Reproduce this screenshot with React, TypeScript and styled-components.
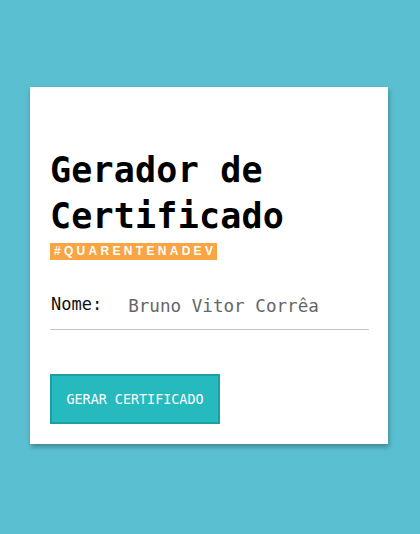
import React from "react";
import styled, { createGlobalStyle } from "styled-components";

const Global = createGlobalStyle`
  html, body { margin: 0; padding: 0; }
  body { background: #5bbfd2; width: 420px; height: 534px; overflow: hidden; }
`;

const Page = styled.div`
  display: flex;
  justify-content: flex-start;
  padding: 87px 0 0 30px;
`;

const Card = styled.div`
  box-sizing: border-box;
  width: 358px;
  height: 357px;
  background: #ffffff;
  box-shadow: 1px 3px 5px rgba(0, 0, 0, 0.3);
  padding: 60px 19px 0 20px;
  display: flex;
  flex-direction: column;
  font-family: "DejaVu Sans Mono", monospace;
`;

const Title = styled.h1`
  margin: 0;
  font-size: 35px;
  line-height: 46px;
  font-weight: bold;
  color: #000;
  letter-spacing: 0.2px;
`;

const Badge = styled.span`
  align-self: flex-start;
  margin-top: 4px;
  background: #f9a544;
  color: #fff;
  font-family: "Liberation Sans", Arial, sans-serif;
  font-weight: bold;
  font-size: 12px;
  letter-spacing: 3.3px;
  line-height: 17px;
  padding: 0 1px 0 4px;
`;

const Field = styled.label`
  display: flex;
  align-items: flex-end;
  gap: 26px;
  margin-top: 33px;
  padding: 0 0 12px 1px;
  border-bottom: 1px solid #c4c4c4;
`;

const Label = styled.span`
  font-size: 17px;
  line-height: 22px;
  margin-bottom: 2px;
  color: #111;
`;

const Input = styled.input`
  border: none;
  outline: none;
  padding: 0;
  height: 22px;
  line-height: 22px;
  flex: 1;
  min-width: 0;
  font-family: "DejaVu Sans Mono", monospace;
  font-size: 17.6px;
  color: #666;
  background: transparent;
`;

const Button = styled.button`
  align-self: flex-start;
  margin-top: 44px;
  width: 170px;
  height: 50px;
  background: #26babe;
  border: 2px solid #1c9ea3;
  color: #fff;
  font-family: "DejaVu Sans Mono", monospace;
  font-size: 13.4px;
  padding: 0;
  cursor: pointer;
`;

export default function App() {
  return (
    <>
      <Global />
      <Page>
        <Card>
          <Title>
            Gerador de
            <br />
            Certificado
          </Title>
          <Badge>#QUARENTENADEV</Badge>
          <Field>
            <Label>Nome:</Label>
            <Input defaultValue="Bruno Vitor Corrêa" />
          </Field>
          <Button>GERAR CERTIFICADO</Button>
        </Card>
      </Page>
    </>
  );
}
